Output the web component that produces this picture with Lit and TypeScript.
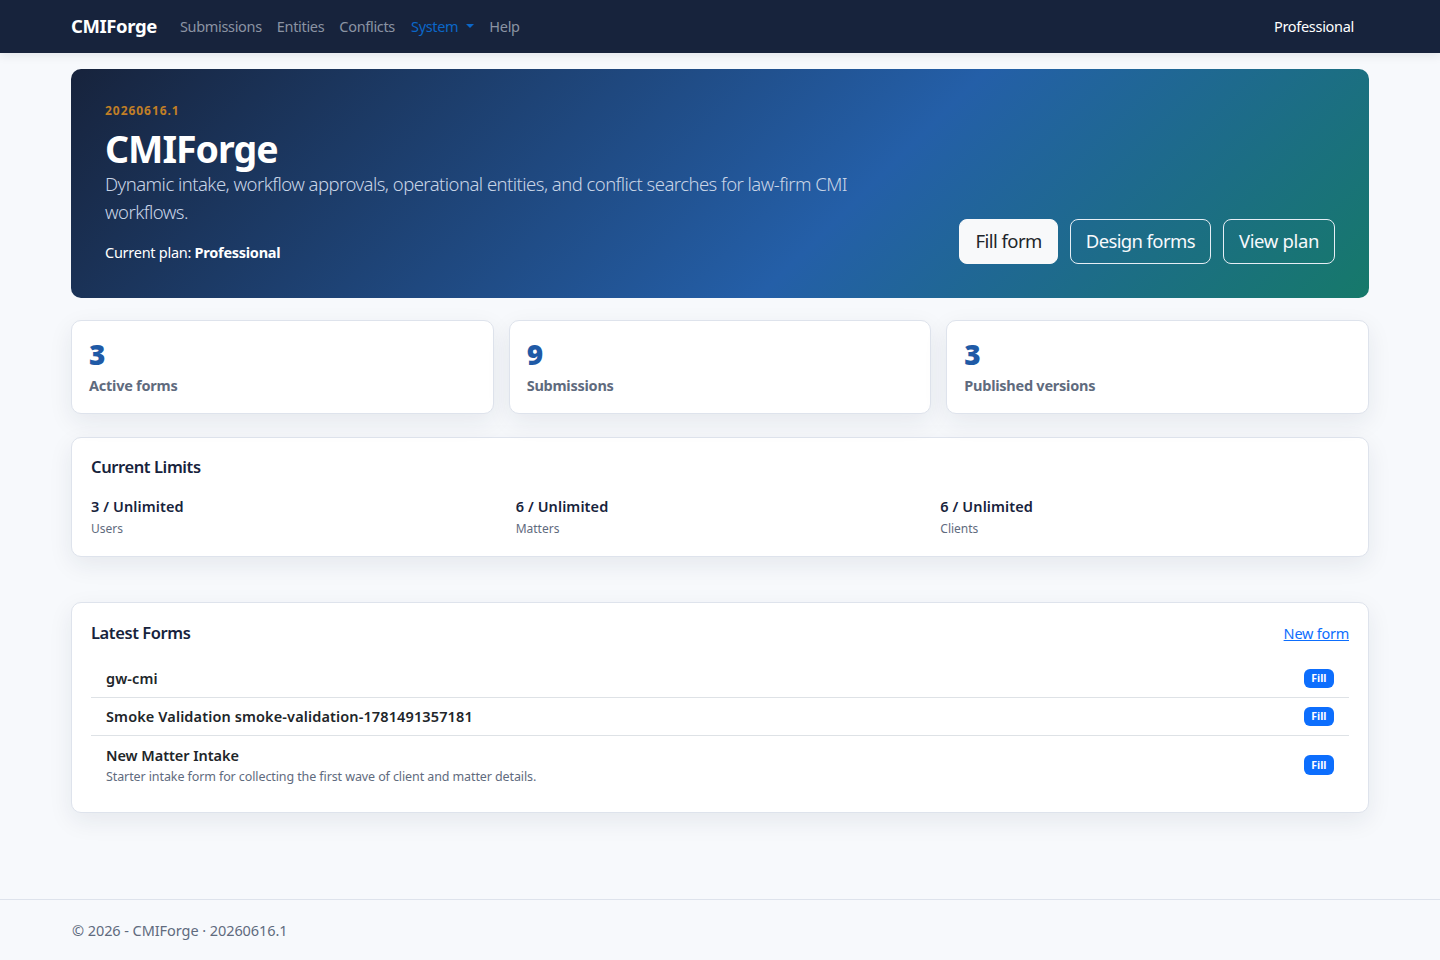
import { LitElement, html, css } from 'lit';
import { customElement } from 'lit/decorators.js';

const stats = [
  { value: '3', label: 'Active forms' },
  { value: '9', label: 'Submissions' },
  { value: '3', label: 'Published versions' },
];

const limits = [
  { value: '3 / Unlimited', label: 'Users' },
  { value: '6 / Unlimited', label: 'Matters' },
  { value: '6 / Unlimited', label: 'Clients' },
];

const forms = [
  { name: 'gw-cmi', note: '' },
  { name: 'Smoke Validation smoke-validation-1781491357181', note: '' },
  { name: 'New Matter Intake', note: 'Starter intake form for collecting the first wave of client and matter details.' },
];

@customElement('app-root')
export class AppRoot extends LitElement {
  static styles = css`
    :host {
      display: flex;
      flex-direction: column;
      min-height: 960px;
      background: #f7f9fc;
      color: #212529;
      font-family: "Noto Sans", "Open Sans", sans-serif;
      font-size: 15px;
    }
    a { text-decoration: none; color: inherit; }

    .navbar {
      height: 53px;
      box-sizing: border-box;
      padding: 0 86px 2px 71px;
      background: #17233c;
      box-shadow: 0 2px 10px rgba(23, 35, 60, 0.1);
      display: flex;
      align-items: center;
    }
    .brand { color: #fff; font-size: 18.5px; font-weight: 700; letter-spacing: -0.4px; margin-right: 23px; }
    .nav { display: flex; align-items: center; gap: 15px; flex: 1; color: #8b93a3; font-size: 14.5px; letter-spacing: -0.32px; }
    .active { color: #0b67c9; display: flex; align-items: center; gap: 8px; margin-left: 1px; }
    .caret { width: 0; height: 0; border-top: 4px solid #0b67c9; border-left: 4px solid transparent; border-right: 4px solid transparent; }
    .plan-link { color: #fff; font-size: 14.5px; letter-spacing: -0.3px; }

    main { flex: 1; width: 1298px; margin: 0 auto; padding-top: 16px; }

    .hero {
      height: 229px;
      box-sizing: border-box;
      border-radius: 10px;
      padding: 34px;
      background: linear-gradient(135deg, #17233c 0%, #245fa8 60%, #16796a 100%);
      color: #fff;
      display: flex;
      justify-content: space-between;
      align-items: flex-end;
      margin-bottom: 22px;
    }
    .version { color: #c17f26; font-size: 12px; font-weight: 700; letter-spacing: 0.95px; line-height: 16px; margin-bottom: 1px; }
    .hero h1 { margin: 8px 0 0; font-size: 37.5px; line-height: 43px; font-weight: 700; letter-spacing: -1px; }
    .lead { margin: 0 0 15px; width: 780px; color: #c8d4e6; font-size: 18.5px; font-weight: 300; line-height: 28px; letter-spacing: -0.54px; }
    .current { font-size: 14.5px; line-height: 22px; letter-spacing: -0.27px; padding-bottom: 1px; }
    .current b { font-weight: 700; }
    .actions { display: flex; gap: 12px; }
    .btn { height: 45px; box-sizing: border-box; display: flex; align-items: center; padding: 0 15px 2px; border: 1px solid #e6eef5; border-radius: 8px; color: #f7f9fc; font-size: 18.5px; letter-spacing: -0.35px; }
    .btn.light { background: #f8f9fa; color: #212529; border-color: #f8f9fa; letter-spacing: -0.55px; }
    .btn.design { letter-spacing: -0.62px; }

    .card { background: #fff; border: 1px solid #dee3ec; border-radius: 10px; box-shadow: 0 8px 24px rgba(23, 35, 60, 0.08); box-sizing: border-box; }

    .stats { display: grid; grid-template-columns: repeat(3, 1fr); gap: 15px; margin-bottom: 23px; }
    .stat { height: 94px; padding: 17px; }
    .stat-value { color: #1f5aa6; font-size: 28px; line-height: 32px; font-weight: 900; }
    .stat-label { color: #5f6b7e; font-size: 14.5px; font-weight: 700; line-height: 30px; letter-spacing: -0.25px; }

    .limits { height: 120px; padding: 19px; margin-bottom: 45px; }
    h2 { margin: 0; font-size: 16.5px; line-height: 20px; font-weight: 600; color: #17233c; letter-spacing: -0.4px; }
    .limit-grid { display: grid; grid-template-columns: repeat(3, 1fr); gap: 16px; margin-top: 18px; }
    .limit-value { font-size: 14.5px; font-weight: 600; line-height: 22px; color: #17233c; letter-spacing: 0.1px; }
    .limit-label { font-size: 12px; color: #5f6b7e; line-height: 24px; }

    .latest { height: 211px; padding: 20px 19px; margin-bottom: 86px; }
    .latest-head { display: flex; justify-content: space-between; align-items: center; margin-bottom: 17px; }
    .new-link { color: #0d6efd; text-decoration: underline; font-size: 14.5px; letter-spacing: -0.25px; }
    .row { display: flex; justify-content: space-between; align-items: center; padding: 8px 15px; border-bottom: 1px solid #dee2e6; }
    .row:last-child { border-bottom: none; padding: 9px 15px 5px; }
    .row-name { font-size: 14.5px; font-weight: 600; line-height: 21px; letter-spacing: 0.12px; }
    .row:last-child .row-name { letter-spacing: -0.05px; }
    .row-note { font-size: 12.5px; color: #5f6b7e; line-height: 22px; letter-spacing: -0.1px; }
    .badge { background: #0d6efd; color: #fff; font-size: 10.5px; font-weight: 700; line-height: 12px; padding: 3.5px 7.5px 4px; border-radius: 6px; }
    .row:last-child .badge { margin-bottom: 3px; }

    footer { height: 61px; box-sizing: border-box; border-top: 1px solid #dee3ec; padding: 0 72px; display: flex; align-items: center; color: #5f6b7e; font-size: 14.5px; letter-spacing: -0.07px; }
  `;

  render() {
    return html`
      <nav class="navbar">
        <a class="brand" href="#">CMIForge</a>
        <div class="nav">
          <a href="#">Submissions</a>
          <a href="#">Entities</a>
          <a href="#">Conflicts</a>
          <a class="active" href="#">System <span class="caret"></span></a>
          <a href="#">Help</a>
        </div>
        <a class="plan-link" href="#">Professional</a>
      </nav>
      <main>
        <section class="hero">
          <div>
            <div class="version">20260616.1</div>
            <h1>CMIForge</h1>
            <p class="lead">Dynamic intake, workflow approvals, operational entities, and conflict searches for law-firm CMI workflows.</p>
            <div class="current">Current plan: <b>Professional</b></div>
          </div>
          <div class="actions">
            <a class="btn light" href="#">Fill form</a>
            <a class="btn design" href="#">Design forms</a>
            <a class="btn" href="#">View plan</a>
          </div>
        </section>
        <section class="stats">
          ${stats.map(s => html`
            <div class="card stat">
              <div class="stat-value">${s.value}</div>
              <div class="stat-label">${s.label}</div>
            </div>`)}
        </section>
        <section class="card limits">
          <h2>Current Limits</h2>
          <div class="limit-grid">
            ${limits.map(l => html`
              <div>
                <div class="limit-value">${l.value}</div>
                <div class="limit-label">${l.label}</div>
              </div>`)}
          </div>
        </section>
        <section class="card latest">
          <div class="latest-head">
            <h2>Latest Forms</h2>
            <a class="new-link" href="#">New form</a>
          </div>
          ${forms.map(f => html`
            <div class="row">
              <div>
                <div class="row-name">${f.name}</div>
                ${f.note ? html`<div class="row-note">${f.note}</div>` : ''}
              </div>
              <span class="badge">Fill</span>
            </div>`)}
        </section>
      </main>
      <footer>© 2026 - CMIForge · 20260616.1</footer>
    `;
  }
}
